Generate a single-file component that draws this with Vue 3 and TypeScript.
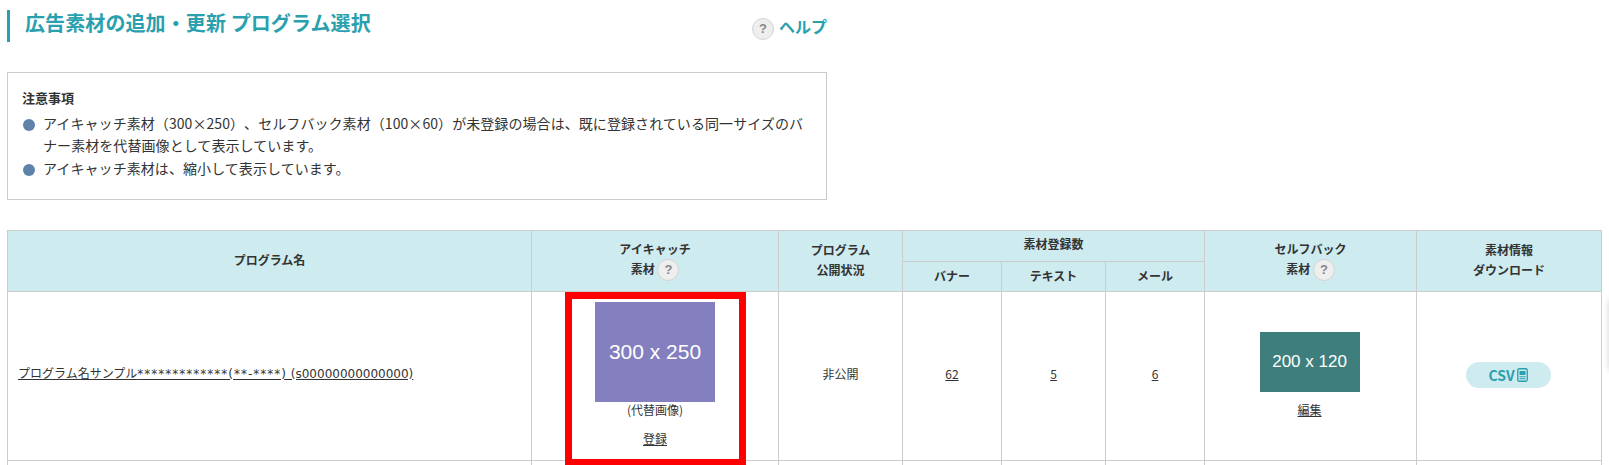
<template>
  <div class="page">
    <div class="head">
      <h1 class="title">広告素材の追加・更新 プログラム選択</h1>
      <a class="help"><span class="q q-help">?</span><span class="help-text">ヘルプ</span></a>
    </div>

    <div class="notice">
      <p class="notice-title">注意事項</p>
      <ul>
        <li v-for="n in notes" :key="n">{{ n }}</li>
      </ul>
    </div>

    <table class="list">
      <colgroup>
        <col v-for="w in colWidths" :key="w.id" :style="{ width: w.px + 'px' }" />
      </colgroup>
      <thead>
        <tr class="row-a">
          <th rowspan="2">プログラム名</th>
          <th rowspan="2">アイキャッチ<br />素材 <span class="q">?</span></th>
          <th rowspan="2">プログラム<br />公開状況</th>
          <th colspan="3" class="count-head">素材登録数</th>
          <th rowspan="2">セルフバック<br />素材 <span class="q">?</span></th>
          <th rowspan="2">素材情報<br />ダウンロード</th>
        </tr>
        <tr class="row-b">
          <th>バナー</th>
          <th>テキスト</th>
          <th>メール</th>
        </tr>
      </thead>
      <tbody>
        <tr class="row-main">
          <td class="name"><a>プログラム名サンプル<span class="stars">*************(**-****)</span> (s00000000000000)</a></td>
          <td class="center has-thumb">
            <div class="thumb eyecatch">300 x 250</div>
            <div class="sub">(代替画像)</div>
            <a class="action">登録</a>
          </td>
          <td class="center">非公開</td>
          <td class="center"><a>62</a></td>
          <td class="center"><a>5</a></td>
          <td class="center"><a>6</a></td>
          <td class="center has-thumb nudge">
            <div class="thumb selfback">200 x 120</div>
            <a class="action edit">編集</a>
          </td>
          <td class="center has-thumb nudge">
            <a class="csv">CSV
              <svg width="11" height="14" viewBox="0 0 11 14" aria-hidden="true">
                <rect x="0.75" y="0.75" width="9.5" height="12.5" rx="1.5" fill="none" stroke="#2a9fae" stroke-width="1.3" />
                <rect x="2.5" y="3" width="6" height="4" fill="#2a9fae" />
                <path d="M2.5 8.8h6M2.5 10.8h6" stroke="#2a9fae" stroke-width="1" />
              </svg>
            </a>
          </td>
        </tr>
        <tr class="row-next">
          <td v-for="i in 8" :key="i"></td>
        </tr>
      </tbody>
    </table>

    <div class="marker"></div>
    <div class="edge-tab"></div>
  </div>
</template>

<script setup lang="ts">
const notes: string[] = [
  "アイキャッチ素材（300×250）、セルフバック素材（100×60）が未登録の場合は、既に登録されている同一サイズのバナー素材を代替画像として表示しています。",
  "アイキャッチ素材は、縮小して表示しています。",
];

const colWidths = [
  { id: "name", px: 524 },
  { id: "eye", px: 247 },
  { id: "status", px: 124 },
  { id: "banner", px: 99 },
  { id: "text", px: 104 },
  { id: "mail", px: 99 },
  { id: "self", px: 212 },
  { id: "dl", px: 185 },
];
</script>

<style>
html,
body {
  margin: 0;
  overflow: hidden;
  background: #fff;
}
</style>

<style scoped>
.page {
  position: relative;
  height: 465px;
  overflow: hidden;
  padding: 10px 0 0 7px;
  box-sizing: border-box;
  color: #333;
  font-family: "Noto Sans CJK JP", "Noto Sans", sans-serif;
  font-size: 13px;
  text-spacing-trim: space-all;
}

.head {
  width: 820px;
  height: 32px;
  display: flex;
  justify-content: space-between;
  align-items: flex-start;
}

.title {
  margin: 0;
  border-left: 3px solid #2a9fae;
  padding-left: 15px;
  height: 32px;
  line-height: 26px;
  font-size: 20px;
  font-weight: 700;
  letter-spacing: 0.1px;
  color: #2a9fae;
  white-space: nowrap;
}

.help {
  display: flex;
  align-items: center;
  gap: 5px;
  margin-top: 5px;
  font-size: 16px;
  font-weight: 700;
  color: #2a9fae;
  line-height: 22px;
}

.help-text {
  margin-bottom: 6px;
}

.q {
  display: inline-block;
  width: 22px;
  height: 22px;
  box-sizing: border-box;
  border: 1px solid #d4d4d4;
  border-radius: 50%;
  background: #eee;
  color: #888;
  font-size: 13px;
  font-weight: 700;
  line-height: 20px;
  text-align: center;
  vertical-align: middle;
  font-family: "Liberation Sans", sans-serif;
}

.notice {
  box-sizing: border-box;
  width: 820px;
  height: 128px;
  margin-top: 30px;
  border: 1px solid #ccc;
  padding: 13px 14px 0;
}

.notice-title {
  margin: 0 0 2px;
  font-weight: 700;
  line-height: 24px;
  font-size: 13px;
}

.notice ul {
  list-style: none;
  margin: 0;
  padding: 0;
}

.notice li {
  position: relative;
  padding-left: 21px;
  line-height: 22px;
  margin-bottom: 1px;
  font-size: 14px;
  letter-spacing: 0.07px;
}

.notice li::before {
  content: "";
  position: absolute;
  left: 1px;
  top: 7px;
  width: 12px;
  height: 12px;
  border-radius: 50%;
  background: #5f82ab;
}

.list {
  table-layout: fixed;
  border-collapse: collapse;
  width: 1594px;
  margin-top: 30px;
}

.list th,
.list td {
  border: 1px solid #ccc;
  padding: 0;
}

.list th {
  background: #ceebef;
  font-size: 12px;
  font-weight: 700;
  line-height: 20px;
  text-align: center;
  color: #333;
  padding-bottom: 2px;
}

.row-a {
  height: 31px;
}

.row-b {
  height: 30px;
}

.list th.count-head {
  vertical-align: top;
  padding-top: 3px;
}

.row-main {
  height: 169px;
}

.row-next {
  height: 40px;
}

.list td {
  font-size: 12px;
  line-height: 18px;
  padding-bottom: 4px;
}

.list td.has-thumb {
  padding-bottom: 2px;
}

.list td.nudge {
  padding-right: 2px;
}

.list a {
  text-decoration: underline;
  color: #333;
}

.list td.name {
  padding-left: 10px;
  font-family: "DejaVu Sans", "Noto Sans CJK JP", sans-serif;
}

.stars {
  letter-spacing: 1px;
}

.center {
  text-align: center;
}

.thumb {
  display: flex;
  align-items: center;
  justify-content: center;
  margin: 0 auto;
  color: #fff;
  font-family: "Liberation Sans", sans-serif;
}

.eyecatch {
  width: 120px;
  height: 100px;
  background: #8480bf;
  font-size: 21px;
}

.selfback {
  width: 100px;
  height: 60px;
  background: #3e7f7d;
  font-size: 17px;
}

.sub {
  margin-top: -1px;
}

.action {
  display: inline-block;
  margin-top: 11px;
}

.action.edit {
  margin-top: 9px;
}

.list a.csv {
  display: inline-flex;
  align-items: center;
  justify-content: center;
  gap: 2px;
  width: 85px;
  height: 26px;
  border-radius: 13px;
  background: #ceebef;
  color: #2a9fae;
  font-size: 14px;
  font-weight: 700;
  text-decoration: none;
}

.marker {
  position: absolute;
  left: 565px;
  top: 292px;
  width: 181px;
  height: 174px;
  box-sizing: border-box;
  border: 7px solid #f00;
}

.edge-tab {
  position: absolute;
  left: 1609px;
  top: 298px;
  width: 40px;
  height: 74px;
  border-radius: 6px;
  box-shadow: 0 0 6px rgba(0, 0, 0, 0.18);
}
</style>
